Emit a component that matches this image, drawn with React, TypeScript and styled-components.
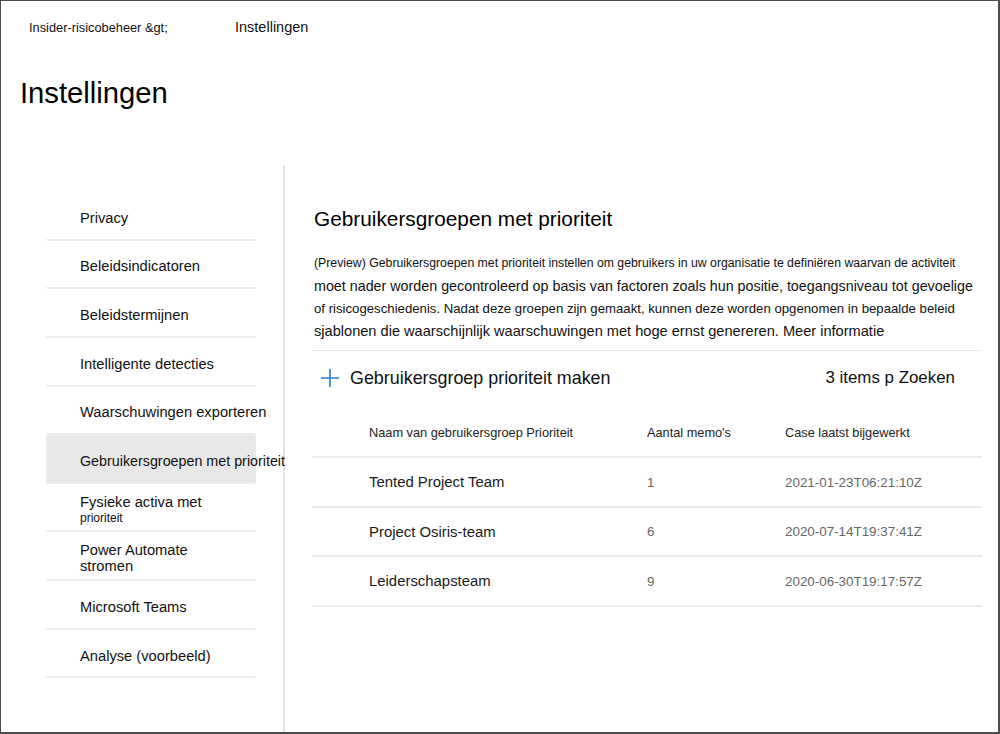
import React from "react";
import styled, { createGlobalStyle } from "styled-components";

const Global = createGlobalStyle`
  html, body { margin: 0; padding: 0; background: #fff; }
  body { font-family: "Liberation Sans", Arial, sans-serif; color: #111; }
  * { box-sizing: border-box; }
`;

const Frame = styled.div`
  width: 1000px;
  height: 734px;
  border-top: 1px solid #4d4d4d;
  border-left: 1px solid #4d4d4d;
  border-right: 2px solid #4d4d4d;
  border-bottom: 2px solid #4d4d4d;
  display: flex;
  flex-direction: column;
  overflow: hidden;
`;

const Breadcrumb = styled.div`
  display: flex;
  align-items: baseline;
  padding: 18px 0 0 28px;
  height: 44px;
`;

const Crumb = styled.span<{ $size: number; $width?: number }>`
  font-size: ${(p) => p.$size}px;
  color: #111;
  ${(p) => (p.$width ? `width: ${p.$width}px;` : "")}
`;

const PageTitle = styled.h1`
  margin: 0;
  padding: 31px 0 0 19px;
  height: 120px;
  font-size: 29.2px;
  font-weight: 400;
  color: #000;
  line-height: 34px;
`;

const Body = styled.div`
  flex: 1;
  display: flex;
  min-height: 0;
`;

const Sidebar = styled.nav`
  width: 284px;
  flex-shrink: 0;
  border-right: 2px solid #e2e2e2;
  padding: 27px 0 0 45px;
`;

const NavItem = styled.div<{ $selected?: boolean }>`
  width: 210px;
  height: 48.65px;
  border-bottom: 2px solid #ededed;
  background: ${(p) => (p.$selected ? "#e8e8e8" : "transparent")};
  border-radius: 2px;
  display: flex;
  flex-direction: column;
  justify-content: center;
  padding: 5px 0 0 34px;
  color: #111;
  white-space: nowrap;
  overflow: visible;
`;

const NavLine = styled.span<{ $size?: number }>`
  display: block;
  font-size: ${(p) => p.$size ?? 14.7}px;
  line-height: 16px;
`;

const Main = styled.main`
  flex: 1;
  min-width: 0;
  padding: 41px 16px 0 27px;
`;

const SectionTitle = styled.h2`
  margin: 0 0 0 2px;
  font-size: 20.8px;
  font-weight: 400;
  line-height: 26px;
  color: #000;
`;

const Description = styled.div`
  margin: 20px 0 0 0;
  padding: 0 0 8px 2px;
  border-bottom: 1px solid #ebebeb;
`;

const DescLine = styled.span<{ $size: number; $height: number }>`
  display: block;
  font-size: ${(p) => p.$size}px;
  line-height: ${(p) => p.$height}px;
  color: #111;
  white-space: nowrap;
`;

const CommandBar = styled.div`
  display: flex;
  align-items: center;
  justify-content: space-between;
  height: 54px;
  padding: 0 27px 0 8px;
`;

const AddButton = styled.button`
  display: flex;
  align-items: center;
  gap: 10px;
  border: none;
  background: none;
  padding: 0;
  font-family: inherit;
  font-size: 17.9px;
  color: #111;
  cursor: pointer;
`;

const Count = styled.span`
  font-size: 16.9px;
  color: #111;
`;

const Row = styled.div<{ $header?: boolean }>`
  display: grid;
  grid-template-columns: 278px 138px 1fr;
  align-items: center;
  height: ${(p) => (p.$header ? 53 : 49.5)}px;
  padding: ${(p) => (p.$header ? 4 : 1)}px 0 0 57px;
  border-bottom: 2px solid #ececec;
`;

const HeaderCell = styled.span`
  font-size: 12.75px;
  color: #222;
`;

const NameCell = styled.span`
  font-size: 14.9px;
  color: #1a1a1a;
`;

const DataCell = styled.span`
  font-size: 13.4px;
  color: #666;
`;

const navItems: { lines: { t: string; s?: number }[]; selected?: boolean }[] = [
  { lines: [{ t: "Privacy" }] },
  { lines: [{ t: "Beleidsindicatoren" }] },
  { lines: [{ t: "Beleidstermijnen" }] },
  { lines: [{ t: "Intelligente detecties" }] },
  { lines: [{ t: "Waarschuwingen exporteren" }] },
  { lines: [{ t: "Gebruikersgroepen met prioriteit", s: 14.3 }], selected: true },
  { lines: [{ t: "Fysieke activa met" }, { t: "prioriteit", s: 12 }] },
  { lines: [{ t: "Power Automate" }, { t: "stromen" }] },
  { lines: [{ t: "Microsoft Teams" }] },
  { lines: [{ t: "Analyse (voorbeeld)" }] },
];

const rows = [
  { name: "Tented Project Team", count: "1", date: "2021-01-23T06:21:10Z" },
  { name: "Project Osiris-team", count: "6", date: "2020-07-14T19:37:41Z" },
  { name: "Leiderschapsteam", count: "9", date: "2020-06-30T19:17:57Z" },
];

const PlusIcon = () => (
  <svg width="20" height="20" viewBox="0 0 20 20" aria-hidden="true">
    <path d="M10 1v18M1 10h18" stroke="#2b7cd3" strokeWidth="1.6" fill="none" />
  </svg>
);

export default function App() {
  return (
    <>
      <Global />
      <Frame>
        <Breadcrumb>
          <Crumb $size={12.8} $width={206}>Insider-risicobeheer &amp;gt;</Crumb>
          <Crumb $size={14.5}>Instellingen</Crumb>
        </Breadcrumb>
        <PageTitle>Instellingen</PageTitle>
        <Body>
          <Sidebar>
            {navItems.map((item, i) => (
              <NavItem key={i} $selected={item.selected}>
                {item.lines.map((l, j) => (
                  <NavLine key={j} $size={l.s}>
                    {l.t}
                  </NavLine>
                ))}
              </NavItem>
            ))}
          </Sidebar>
          <Main>
            <SectionTitle>Gebruikersgroepen met prioriteit</SectionTitle>
            <Description>
              <DescLine $size={12.27} $height={22}>
                (Preview) Gebruikersgroepen met prioriteit instellen om gebruikers in uw organisatie te definiëren waarvan de activiteit
              </DescLine>
              <DescLine $size={14.3} $height={24}>
                moet nader worden gecontroleerd op basis van factoren zoals hun positie, toegangsniveau tot gevoelige
              </DescLine>
              <DescLine $size={13.2} $height={22}>
                of risicogeschiedenis. Nadat deze groepen zijn gemaakt, kunnen deze worden opgenomen in bepaalde beleid
              </DescLine>
              <DescLine $size={14.6} $height={22}>
                sjablonen die waarschijnlijk waarschuwingen met hoge ernst genereren. Meer informatie
              </DescLine>
            </Description>
            <CommandBar>
              <AddButton>
                <PlusIcon />
                Gebruikersgroep prioriteit maken
              </AddButton>
              <Count>3 items p Zoeken</Count>
            </CommandBar>
            <div>
              <Row $header>
                <HeaderCell>Naam van gebruikersgroep Prioriteit</HeaderCell>
                <HeaderCell>Aantal memo's</HeaderCell>
                <HeaderCell>Case laatst bijgewerkt</HeaderCell>
              </Row>
              {rows.map((r) => (
                <Row key={r.name}>
                  <NameCell>{r.name}</NameCell>
                  <DataCell>{r.count}</DataCell>
                  <DataCell>{r.date}</DataCell>
                </Row>
              ))}
            </div>
          </Main>
        </Body>
      </Frame>
    </>
  );
}
